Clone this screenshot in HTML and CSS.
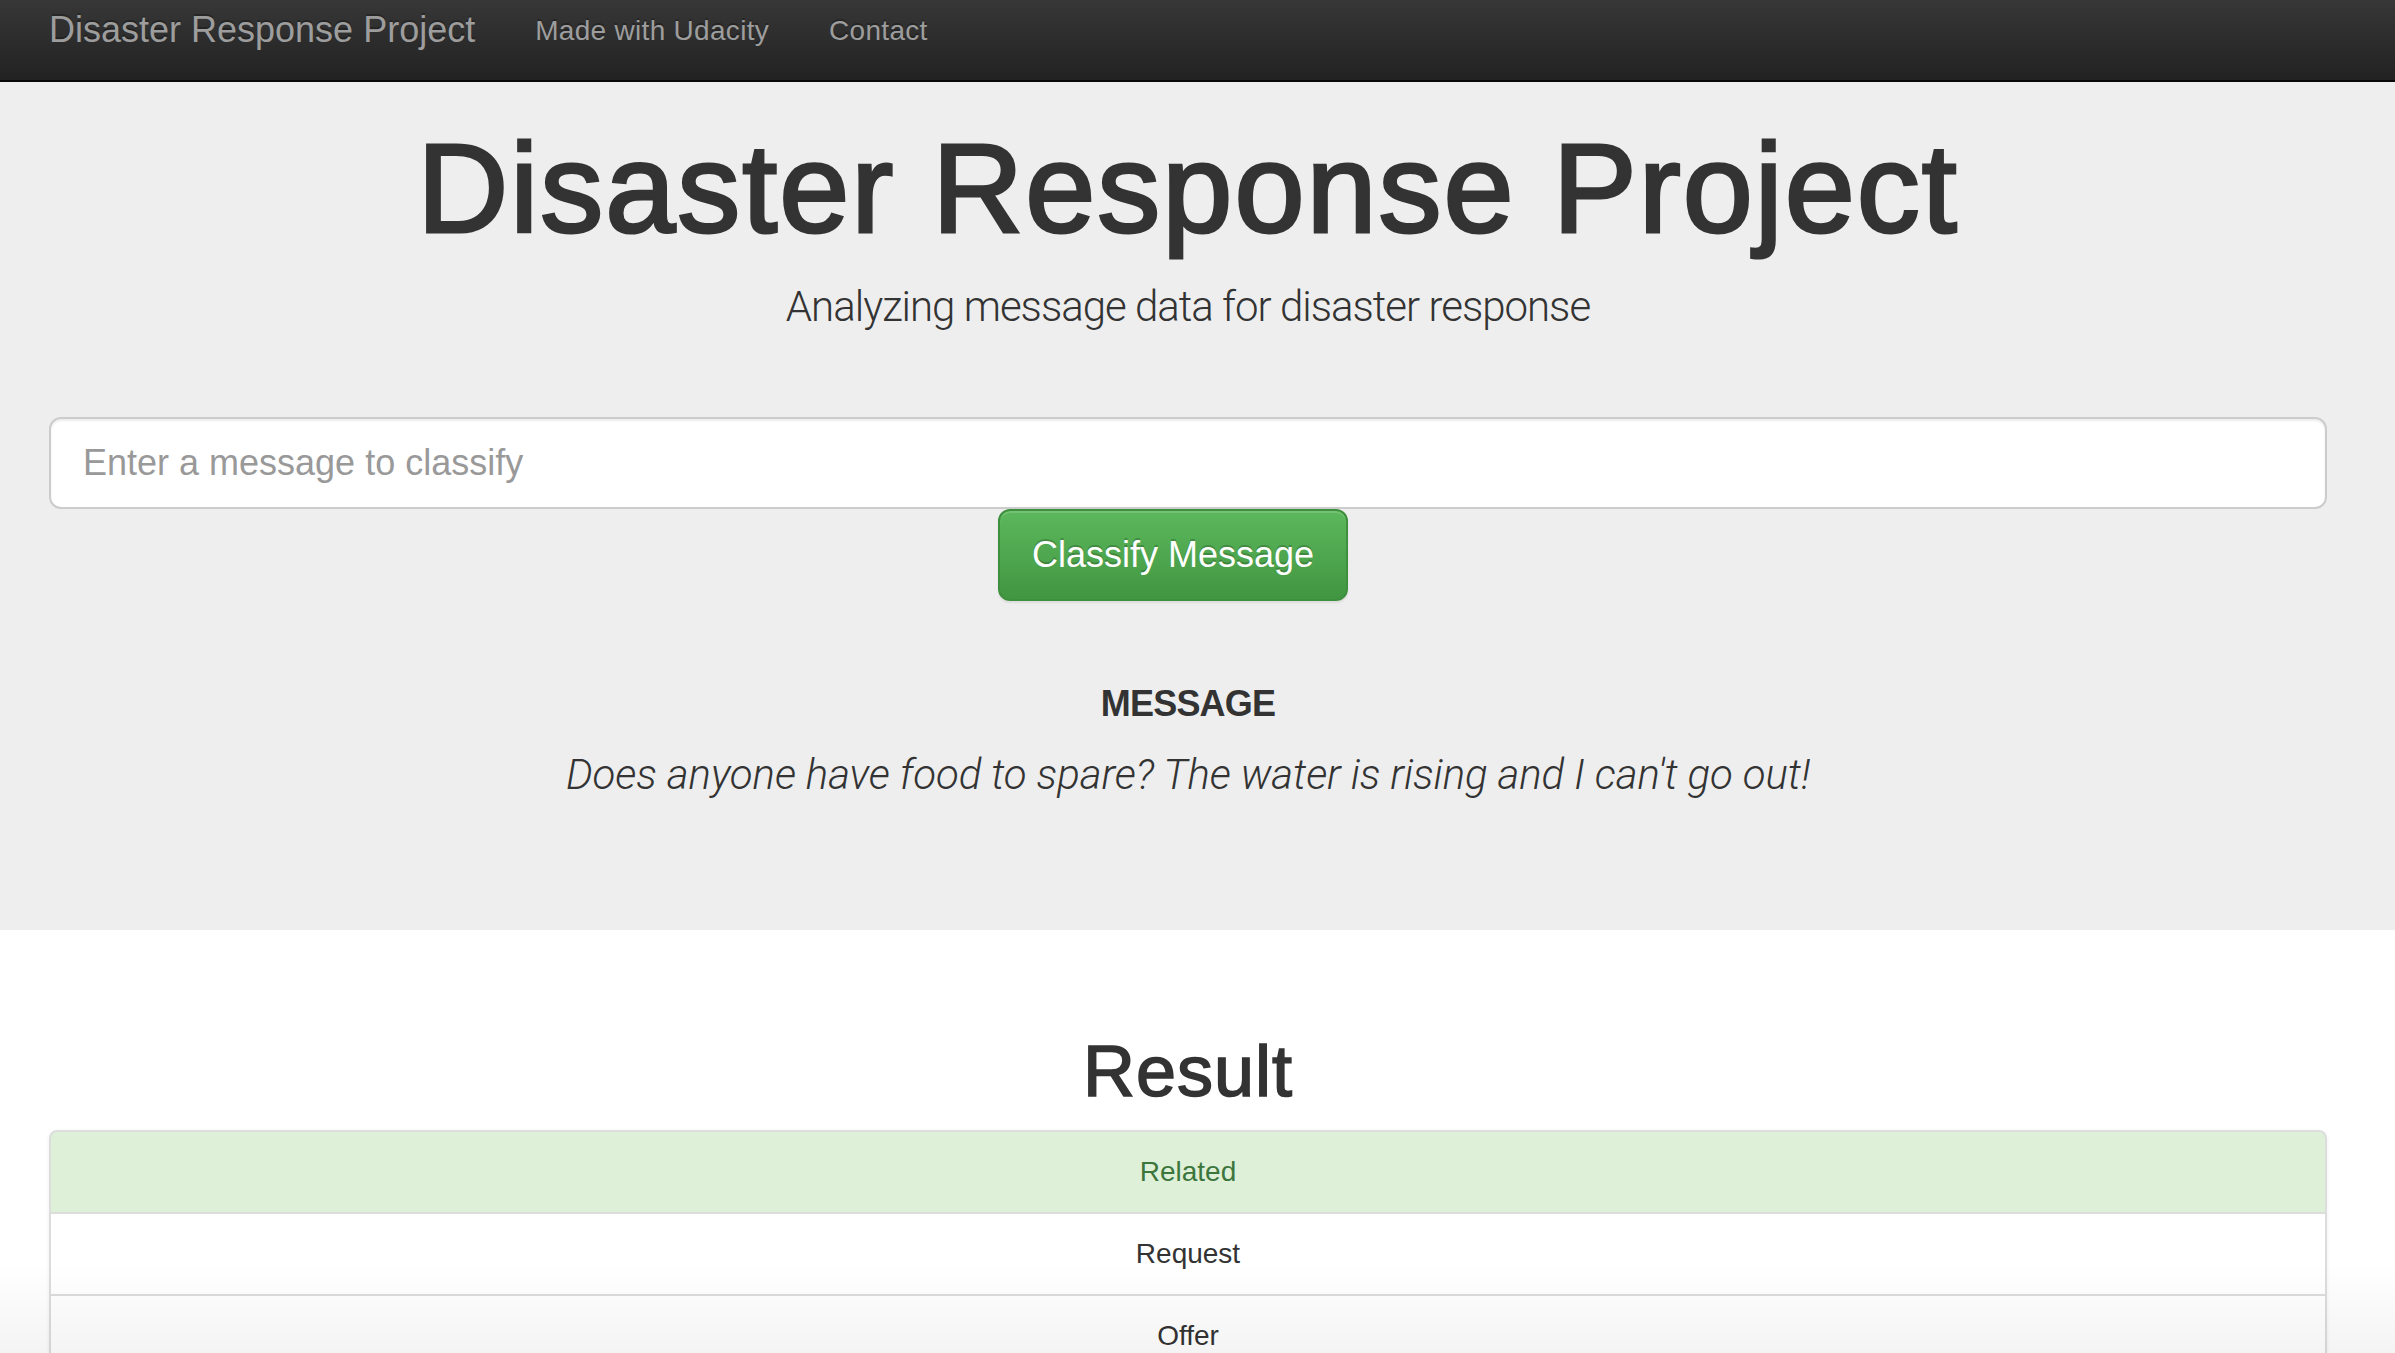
FILE: index.html
```html
<!DOCTYPE html>
<html lang="en">
<head>
<meta charset="utf-8">
<title>Disaster Response Project</title>
<link rel="stylesheet" href="styles.css">
</head>
<body>
<nav class="navbar">
  <div class="nav-inner">
    <a class="brand" href="#">Disaster Response Project</a>
    <ul class="nav-links">
      <li><a href="#">Made with Udacity</a></li>
      <li><a href="#">Contact</a></li>
    </ul>
  </div>
</nav>

<div class="jumbotron">
  <div class="container">
    <h1 class="title">Disaster Response Project</h1>
    <p class="lead">Analyzing message data for disaster response</p>
    <form class="classify-form">
      <input class="form-control" type="text" name="query" placeholder="Enter a message to classify">
      <div class="btn-row">
        <button type="button" class="btn-success">Classify Message</button>
      </div>
    </form>
    <div class="message-block">
      <h4 class="msg-label">MESSAGE</h4>
      <p class="msg-text">Does anyone have food to spare? The water is rising and I can't go out!</p>
    </div>
  </div>
</div>

<div class="container results">
  <h1 class="result-title">Result</h1>
  <ul class="list-group">
    <li class="item item-success">Related</li>
    <li class="item">Request</li>
    <li class="item">Offer</li>
    <li class="item">Aid Related</li>
    <li class="item">Medical Help</li>
  </ul>
</div>
</body>
</html>
```

FILE: styles.css
```css
html {
  overflow: hidden;
}
body {
  margin: 0;
  font-family: "Liberation Sans", Arial, sans-serif;
  color: #333;
  background: #fff;
}
body::after {
  content: "";
  position: fixed;
  left: 0;
  right: 0;
  bottom: 0;
  height: 90px;
  background: linear-gradient(to bottom, rgba(0,0,0,0), rgba(0,0,0,0.045));
  pointer-events: none;
}

/* navbar */
.navbar {
  height: 80px;
  background: linear-gradient(to bottom, #373737 0%, #222 100%);
  border-bottom: 2px solid #080808;
}
.nav-inner {
  display: flex;
  align-items: flex-start;
  padding-left: 49px;
}
.brand {
  font-size: 36px;
  line-height: 60px;
  color: #9d9d9d;
  text-decoration: none;
  padding-right: 30px;
  text-shadow: 0 -2px 0 rgba(0,0,0,0.25);
}
.nav-links {
  display: flex;
  list-style: none;
  margin: 0;
  padding: 0;
}
.nav-links a {
  display: block;
  font-size: 28px;
  line-height: 60px;
  padding: 1px 30px 0;
  letter-spacing: 0.3px;
  color: #9d9d9d;
  text-decoration: none;
  text-shadow: 0 -2px 0 rgba(0,0,0,0.25);
}

/* jumbotron */
.jumbotron {
  background: #eee;
  padding: 38px 0 131px;
}
.container {
  padding: 0 68px 0 49px;
}
.title {
  margin: 0;
  text-align: center;
  font-size: 126px;
  line-height: 138px;
  font-weight: 400;
  letter-spacing: 2px;
  -webkit-text-stroke: 3px #333;
  color: #333;
}
.lead {
  margin: 25px 0 0;
  text-align: center;
  font-family: Roboto, "Liberation Sans", sans-serif;
  font-weight: 300;
  font-size: 42px;
  line-height: 48px;
  letter-spacing: -1px;
  color: #333;
}
.classify-form {
  margin-top: 86px;
}
.form-control {
  display: block;
  box-sizing: border-box;
  width: 100%;
  height: 92px;
  margin: 0;
  padding: 0 32px;
  font-family: "Liberation Sans", Arial, sans-serif;
  font-size: 36px;
  color: #555;
  background: #fff;
  border: 2px solid #ccc;
  border-radius: 12px;
  box-shadow: inset 0 2px 2px rgba(0,0,0,0.075);
  outline: none;
}
.form-control::placeholder {
  color: #999;
}
.btn-row {
  display: flex;
  justify-content: center;
}
.btn-success {
  box-sizing: border-box;
  width: 350px;
  height: 92px;
  margin: 0 30px 0 0;
  padding: 0;
  font-family: "Liberation Sans", Arial, sans-serif;
  font-size: 36px;
  color: #fff;
  text-shadow: 0 -2px 0 rgba(0,0,0,0.2);
  background: linear-gradient(to bottom, #5cb85c 0%, #419641 100%);
  border: 2px solid #3e8f3e;
  border-radius: 12px;
  box-shadow: inset 0 2px 0 rgba(255,255,255,0.15), 0 2px 2px rgba(0,0,0,0.075);
}
.msg-label {
  margin: 83px 0 0;
  text-align: center;
  font-size: 36px;
  line-height: 40px;
  font-weight: 700;
  letter-spacing: -0.8px;
  color: #333;
}
.msg-text {
  margin: 27px 0 0;
  text-align: center;
  font-family: Roboto, "Liberation Sans", sans-serif;
  font-style: italic;
  font-weight: 300;
  font-size: 42px;
  line-height: 48px;
  letter-spacing: -0.1px;
  color: #333;
}

/* results */
.result-title {
  margin: 101px 0 0;
  text-align: center;
  font-size: 72px;
  line-height: 80px;
  font-weight: 400;
  letter-spacing: 1px;
  -webkit-text-stroke: 1.6px #333;
  color: #333;
}
.list-group {
  list-style: none;
  margin: 19px 0 0;
  padding: 0;
  border-radius: 8px;
  box-shadow: 0 2px 4px rgba(0,0,0,0.075);
}
.item {
  border: 2px solid #ddd;
  margin-bottom: -2px;
  background: #fff;
  text-align: center;
  font-size: 28px;
  line-height: 80px;
  color: #333;
}
.item:first-child {
  border-radius: 8px 8px 0 0;
}
.item-success {
  background: #dff0d8;
  color: #3c763d;
}
```
